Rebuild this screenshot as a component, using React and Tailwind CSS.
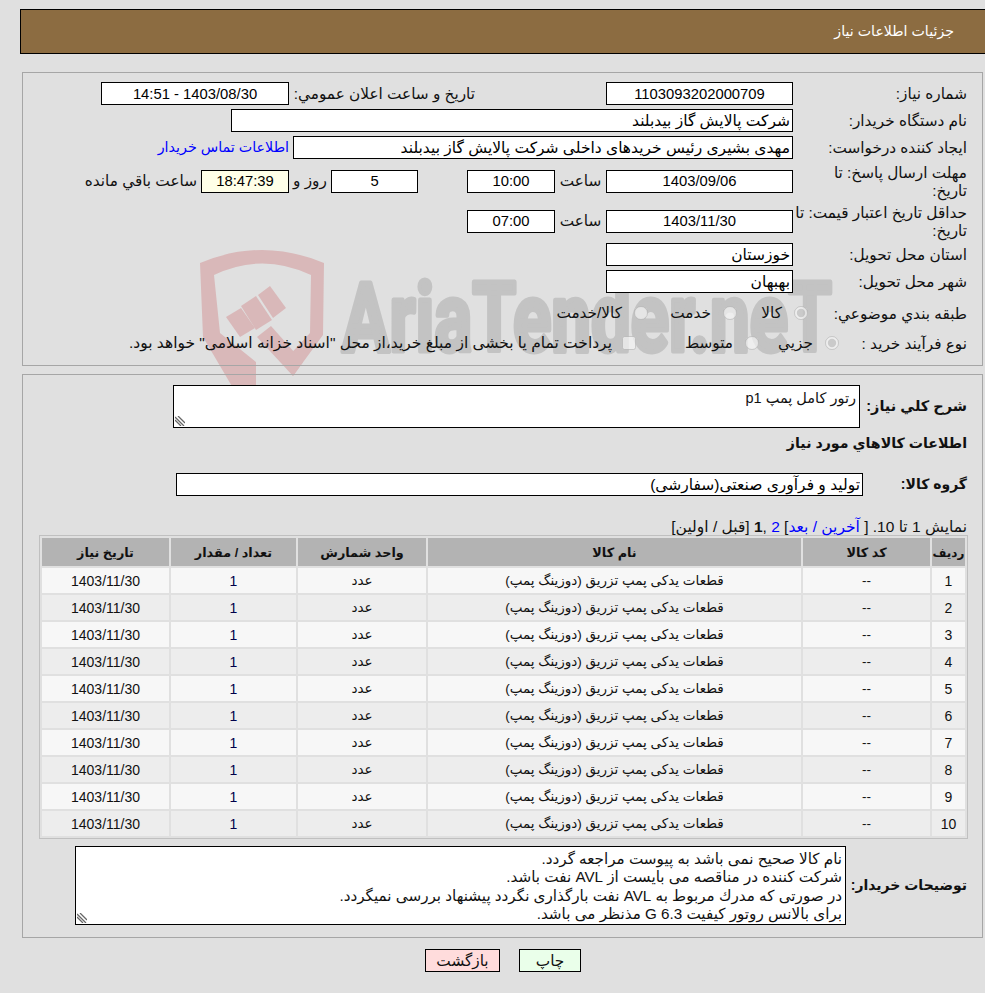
import React from "react";

const ITEMS = [1, 2, 3, 4, 5, 6, 7, 8, 9, 10];

const NOTES = `نام كالا صحيح نمی باشد به پیوست مراجعه گردد.
شركت كننده در مناقصه می بایست از AVL نفت باشد.
در صورتی كه مدرك مربوط به AVL نفت بارگذاری نگردد پیشنهاد بررسی نمیگردد.
برای بالانس روتور كیفیت G 6.3 مذنظر می باشد.`;

function Watermark() {
  return (
    <svg
      className="absolute left-0 top-0 pointer-events-none [direction:ltr]"
      width="985"
      height="420"
      viewBox="0 0 985 420"
    >
      <g fill="#d9b8b9">
        <path d="M200 263 Q262 237 324 263 L323 335 L293 376 L283 362 L310 333 L311 275 Q262 252 214 275 L220 333 L256 362 L256 400 L240 400 L203 337 Z" />
        <polygon points="226,317 241,308 255,328 240,337" />
        <polygon points="241,306 256,296 272,320 256,330" />
        <polygon points="258,295 270,286 286,308 273,318" />
        <polygon points="257,337 271,326 303,362 293,376" />
      </g>
      <text
        x="342"
        y="351"
        fill="#c3c3c3"
        stroke="#c3c3c3"
        strokeWidth="5"
        strokeLinejoin="round"
        fontFamily="Roboto, sans-serif"
        fontWeight="700"
        fontSize="97"
        textLength="490"
        lengthAdjust="spacingAndGlyphs"
        className="[direction:ltr]"
      >
        AriaTender.neT
      </text>
    </svg>
  );
}

function Box({ value, className = "", center = true }) {
  return (
    <input
      readOnly
      value={value}
      className={`h-[23px] border border-black bg-white px-[2px] text-black outline-none ${
        center ? "text-center text-[14.8px]" : "text-[15.5px]"
      } ${className}`}
    />
  );
}

function Label({ children, className = "" }) {
  return <div className={`w-[174px] shrink-0 pt-[1px] leading-[18px] ${className}`}>{children}</div>;
}

function Radio({ checked, text, className = "" }) {
  return (
    <label className={`flex shrink-0 items-center gap-[12px] ${className}`}>
      <input type="radio" disabled defaultChecked={checked} className="m-0 size-[14px]" />
      <span>{text}</span>
    </label>
  );
}

// hatch mark drawn in the corner of the read-only text areas
function Grip() {
  return (
    <svg className="absolute bottom-[2px] left-[2px]" width="10" height="10" viewBox="0 0 10 10">
      <path d="M0 1 L9 10 M0 4 L6 10 M3 0 L10 7" stroke="#666" strokeWidth="1.3" fill="none" />
    </svg>
  );
}

function InfoPanel() {
  return (
    <div className="mt-[18px] ml-[22px] mr-[2px] flex h-[294px] flex-col gap-1 border border-[#a6a6a6] pr-[15px] pt-[9px]">
      <div className="flex h-[23px] items-center">
        <Label>شماره نياز:</Label>
        <Box value="1103093202000709" className="w-[187px]" />
        <div className="mr-[131px] w-[180px] whitespace-nowrap pt-[1px]">تاريخ و ساعت اعلان عمومي:</div>
        <Box value="1403/08/30 - 14:51" className="mr-[6px] w-[188px]" />
      </div>
      <div className="flex h-[23px] items-center">
        <Label>نام دستگاه خريدار:</Label>
        <Box value="شركت پالايش گاز بيدبلند" center={false} className="w-[562px]" />
      </div>
      <div className="flex h-[23px] items-center">
        <Label>ايجاد كننده درخواست:</Label>
        <Box value="مهدی بشيری رئيس خريدهای داخلی شركت پالايش گاز بيدبلند" center={false} className="w-[500px]" />
        <a className="mr-[4px] text-[14.3px] text-[#0000ff]">اطلاعات تماس خريدار</a>
      </div>
      <div className="flex h-[36px] items-center">
        <Label>
          مهلت ارسال پاسخ: تا
          <br />
          تاريخ:
        </Label>
        <Box value="1403/09/06" className="w-[187px]" />
        <div className="w-[51px] text-center">ساعت</div>
        <Box value="10:00" className="w-[88px]" />
        <Box value="5" className="mr-[49px] w-[87px]" />
        <div className="w-[42px] text-center">روز و</div>
        <Box value="18:47:39" className="w-[88px] !bg-[#ffffe8]" />
        <div className="mr-[4px]">ساعت باقي مانده</div>
      </div>
      <div className="flex h-[36px] items-center">
        <Label>
          حداقل تاريخ اعتبار قيمت: تا
          <br />
          تاريخ:
        </Label>
        <Box value="1403/11/30" className="w-[187px]" />
        <div className="w-[51px] text-center">ساعت</div>
        <Box value="07:00" className="w-[88px]" />
      </div>
      <div className="flex h-[23px] items-center">
        <Label>استان محل تحويل:</Label>
        <Box value="خوزستان" center={false} className="w-[187px]" />
      </div>
      <div className="flex h-[23px] items-center">
        <Label>شهر محل تحويل:</Label>
        <Box value="بهبهان" center={false} className="w-[187px]" />
      </div>
      <div className="mt-[3px] flex h-[26px] items-center">
        <Label className="!w-[159px]">طبقه بندي موضوعي:</Label>
        <Radio checked text="كالا" className="w-[71px]" />
        <Radio text="خدمت" className="w-[89px]" />
        <Radio text="كالا/خدمت" />
      </div>
      <div className="flex h-[26px] items-center">
        <Label className="!w-[128px]">نوع فرآيند خريد :</Label>
        <Radio checked text="جزيي" className="w-[80px]" />
        <Radio text="متوسط" className="w-[123px]" />
        <label className="flex items-center gap-[10px]">
          <input type="checkbox" disabled className="m-0 size-[14px]" />
          <span className="text-[15.5px]">پرداخت تمام يا بخشی از مبلغ خريد،از محل "اسناد خزانه اسلامی" خواهد بود.</span>
        </label>
      </div>
    </div>
  );
}

function ItemsTable() {
  return (
    <table className="-mr-[1px] w-[929px] table-fixed border border-[#c0c0c0] border-separate [border-spacing:2px] text-center text-[13.5px]">
      <thead>
        <tr className="h-[28px] bg-[#b3b3b3] text-[12.8px] [&>th]:pt-[2px]">
          <th className="w-[33px] text-[12px] font-bold">رديف</th>
          <th className="w-[127px] font-bold">كد كالا</th>
          <th className="w-[373px] font-bold">نام كالا</th>
          <th className="w-[128px] font-bold">واحد شمارش</th>
          <th className="w-[125px] font-bold">تعداد / مقدار</th>
          <th className="font-bold">تاريخ نياز</th>
        </tr>
      </thead>
      <tbody>
        {ITEMS.map((n) => (
          <tr key={n} className={`h-[25px] [&>td]:pt-[1px] ${n % 2 ? "bg-[#f7f7f7]" : "bg-[#ededed]"}`}>
            <td className="text-[14px]">{n}</td>
            <td>--</td>
            <td>قطعات يدكی پمپ تزريق (دوزينگ پمپ)</td>
            <td>عدد</td>
            <td className="text-[14px] text-[#00004a]">1</td>
            <td className="text-[14px]">1403/11/30</td>
          </tr>
        ))}
      </tbody>
    </table>
  );
}

function GoodsPanel() {
  return (
    <div className="mt-[8px] ml-[22px] mr-[2px] h-[564px] border border-[#a6a6a6] pr-[15px] pt-[10px]">
      <div className="flex h-[43px] items-center">
        <div className="w-[107px] shrink-0 text-[14.5px] font-bold">شرح كلي نياز:</div>
        <div className="relative h-[43px] w-[687px]">
          <textarea
            readOnly
            defaultValue="رتور كامل پمپ p1"
            className="block size-full resize-none border border-black bg-white px-[3px] pt-[2px] text-[14.5px] outline-none"
          />
          <Grip />
        </div>
      </div>
      <div className="mt-[7px] flex h-[18px] items-center text-[14.2px] font-bold">اطلاعات كالاهاي مورد نياز</div>
      <div className="mt-[20px] flex h-[23px] items-center">
        <div className="w-[104px] shrink-0 text-[14px] font-bold">گروه كالا:</div>
        <Box value="توليد و فرآوری صنعتی(سفارشی)" center={false} className="w-[687px]" />
      </div>
      <div className="mt-[22px] h-[17px] text-[15.5px] leading-[18px]">
        نمايش 1 تا 10. [ <a className="text-[#0000ff]">آخرين / بعد</a>] <a className="text-[#0000ff]">2</a> ,
        <b>1</b> [قبل / اولين]
      </div>
      <ItemsTable />
      <div className="mt-[7px] flex h-[79px] items-center">
        <div className="w-[121px] shrink-0 text-[14px] font-bold">توضيحات خريدار:</div>
        <div className="relative h-[79px] w-[771px]">
          <textarea
            readOnly
            defaultValue={NOTES}
            className="block size-full resize-none overflow-hidden border border-black bg-white px-[3px] pt-[3px] text-[15.2px] leading-[18.4px] outline-none"
          />
          <Grip />
        </div>
      </div>
    </div>
  );
}

export default function App() {
  return (
    <div
      dir="rtl"
      className="relative h-[993px] w-[985px] overflow-hidden bg-[#e0e0e0] text-[15.3px] text-[#111] [font-family:'Liberation_Sans','DejaVu_Sans',sans-serif]"
    >
      <Watermark />
      <div className="relative pt-[9px]">
        <div className="ml-[20px] flex h-[45px] items-center border border-r-0 border-black bg-[#8c6c41] pr-[31px] text-[14.2px] text-white">
          جزئيات اطلاعات نياز
        </div>
        <InfoPanel />
        <GoodsPanel />
        <div className="mt-[11px] flex gap-[19px] pr-[404px]">
          <button className="h-[23px] w-[62px] border border-black bg-[#eaffea]">چاپ</button>
          <button className="h-[23px] w-[75px] border border-black bg-[#ffdcdc]">بازگشت</button>
        </div>
      </div>
    </div>
  );
}
